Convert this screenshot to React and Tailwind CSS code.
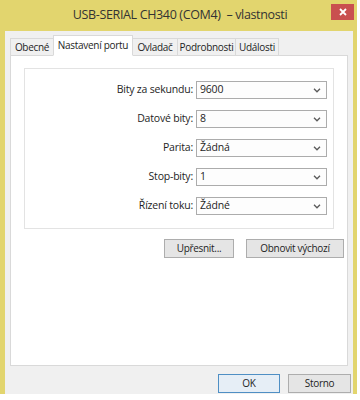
import React from "react";

const font = { fontFamily: '"Open Sans", "Noto Sans", "Liberation Sans", sans-serif' };

function Chevron() {
  return (
    <svg width="8" height="5" viewBox="0 0 8 5" className="shrink-0">
      <path d="M1 0.8 L4 3.8 L7 0.8" fill="none" stroke="#5a5a5a" strokeWidth="1.3" />
    </svg>
  );
}

function Row({ label, value }) {
  return (
    <div className="flex items-center h-[18px]">
      <div className="w-[171px] text-right pr-[3px] text-[10.5px] text-[#1e1e1e] tracking-[-0.2px]">{label}</div>
      <div className="w-[131px] h-[18px] border border-[#acacac] bg-[#fdfdfd] flex items-center justify-between pl-[3px] pr-[5px] text-[10.5px] text-[#1e1e1e] tracking-[-0.2px]">
        <span>{value}</span>
        <Chevron />
      </div>
    </div>
  );
}

function Tab({ label, active, w }) {
  if (active) {
    return (
      <div className={`${w} h-[21px] -mb-px -ml-px bg-white border border-[#d9d9d9] border-b-white flex items-center justify-center text-[10px] text-[#1e1e1e] z-10 tracking-[-0.3px]`}>
        {label}
      </div>
    );
  }
  return (
    <div className={`${w} h-[17px] bg-[#f0f0f0] border border-[#d9d9d9] border-b-0 flex items-center justify-center text-[10px] text-[#1e1e1e] -ml-px tracking-[-0.3px]`}>
      {label}
    </div>
  );
}

function Btn({ children, w, primary }) {
  return (
    <div
      className={`${w} h-[19px] border ${primary ? "border-[#4f8fc4] bg-[#e6eef6]" : "border-[#adadad] bg-[#e5e5e5]"} flex items-center justify-center text-[10px] text-[#1e1e1e] tracking-[-0.3px]`}
    >
      {children}
    </div>
  );
}

export default function App() {
  return (
    <div className="w-[360px] h-[400px] bg-white overflow-hidden" style={font}>
      <div className="w-[357px] h-[394px] bg-[#e2d56e] flex flex-col">
        <div className="h-[31px] relative flex items-center justify-center">
          <div className="text-[12.5px] text-[#333333] pl-[3px] tracking-[-0.35px]">USB-SERIAL CH340 (COM4)&nbsp; – vlastnosti</div>
          <div className="absolute right-[3px] top-[4px] w-[23px] h-[16px] bg-[#c9504f] flex items-center justify-center">
            <svg width="8" height="8" viewBox="0 0 8 8">
              <path d="M1 1 L7 7 M7 1 L1 7" stroke="white" strokeWidth="1.8" />
            </svg>
          </div>
        </div>
        <div className="flex-1 ml-[5px] mr-[4px] bg-[#f0f0f0] flex flex-col px-[5px] pt-[3px]">
          <div className="flex items-end h-[21px] pl-[1px]">
            <Tab label="Obecné" w="w-[44px]" />
            <Tab label="Nastavení portu" w="w-[80px]" active />
            <Tab label="Ovladač" w="w-[46px]" />
            <Tab label="Podrobnosti" w="w-[59px]" />
            <Tab label="Události" w="w-[44px]" />
          </div>
          <div className="h-[311px] bg-white border border-[#d9d9d9] flex flex-col pt-[12px] px-[13px]">
            <div className="h-[161px] border border-[#e3e3e3] flex flex-col pt-[12px] gap-[11px]">
              <Row label="Bity za sekundu:" value="9600" />
              <Row label="Datové bity:" value="8" />
              <Row label="Parita:" value="Žádná" />
              <Row label="Stop-bity:" value="1" />
              <Row label="Řízení toku:" value="Žádné" />
            </div>
            <div className="flex justify-end gap-[12px] mt-[10px] -mr-[10px]">
              <Btn w="w-[70px]">Upřesnit...</Btn>
              <Btn w="w-[98px]">Obnovit výchozí</Btn>
            </div>
          </div>
          <div className="flex justify-end gap-[8px] mt-[8px] -mr-[3px]">
            <Btn w="w-[62px]" primary>OK</Btn>
            <Btn w="w-[63px]">Storno</Btn>
          </div>
        </div>
      </div>
    </div>
  );
}
